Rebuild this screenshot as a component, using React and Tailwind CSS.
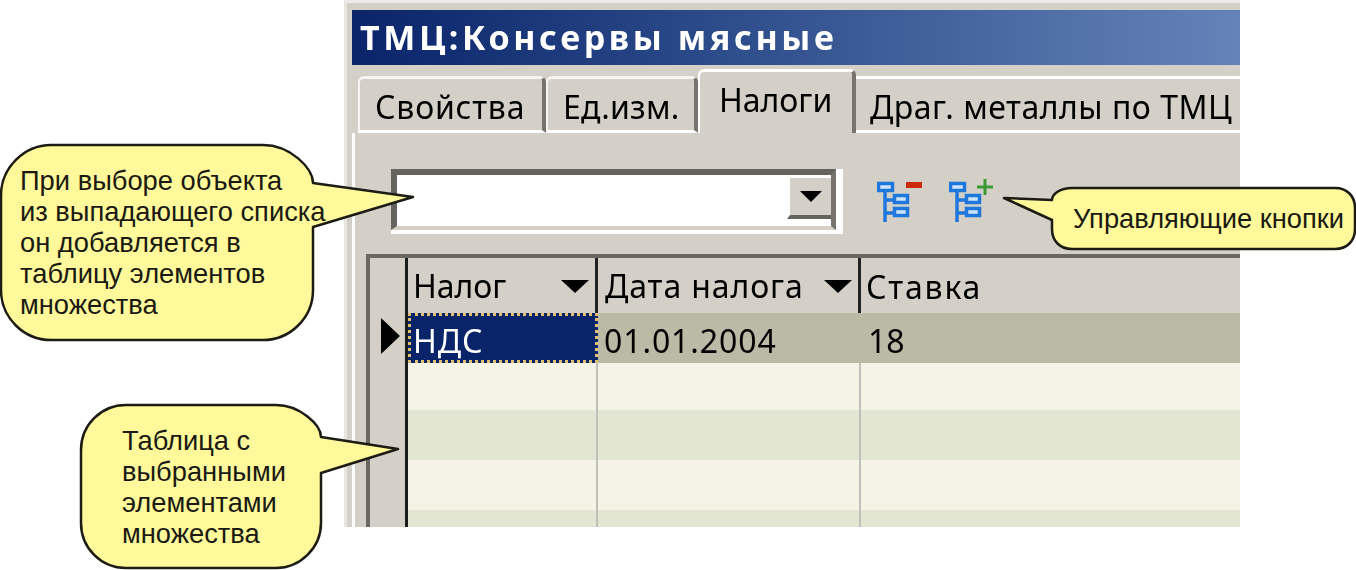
const uiFont = 'font-["Noto_Sans",sans-serif]'

function TreeIcon({ add }) {
  return (
    <svg width="46" height="46" viewBox="0 0 46 46" fill="none" className="blur-[0.5px]">
      <path d="M8 12V44M8 22H16M8 35H16" stroke="#1e78dc" strokeWidth="3.5" />
      <rect x="1.5" y="5.5" width="14" height="7" fill="#cfe3fa" stroke="#1e78dc" strokeWidth="3.5" />
      <rect x="17.5" y="17.5" width="13" height="7" fill="#cfe3fa" stroke="#1e78dc" strokeWidth="3.5" />
      <rect x="17.5" y="30.5" width="13" height="7" fill="#cfe3fa" stroke="#1e78dc" strokeWidth="3.5" />
      {add ? (
        <path d="M36 1V17M28 9H44" stroke="#3a9a32" strokeWidth="3" />
      ) : (
        <rect x="29" y="4" width="16" height="6" fill="#cc2a0c" />
      )}
    </svg>
  )
}

function Tab({ label, active, className }) {
  if (active) {
    return (
      <div className={`h-[64px] bg-[#d4d0c8] border-t-[3px] border-l-[2px] border-white border-r-[4px] border-r-[#77746e] rounded-t-[6px] pl-[19px] relative z-10 ${className}`}>
        <span className="block leading-[55px]">{label}</span>
      </div>
    )
  }
  return (
    <div className={`h-[57px] border-t-[3px] border-l-[2px] border-[#f6f5f1] border-r-[4px] border-r-[#77746e] rounded-t-[6px] pl-[15px] border-b-[3px] border-b-white ${className}`}>
      <span className="block leading-[55px] whitespace-nowrap">{label}</span>
    </div>
  )
}

function Arrow({ className }) {
  return <div className={`w-0 h-0 border-l-[14px] border-r-[14px] border-t-[13px] border-l-transparent border-r-transparent border-t-black ${className}`} />
}

function Callout({ path, className, lines }) {
  return (
    <>
      <svg width="1356" height="570" className="absolute left-0 top-0 pointer-events-none">
        <path d={path} fill="#fff99c" stroke="#1c1c14" strokeWidth="2.5" strokeLinejoin="round" />
      </svg>
      <div className={`absolute font-["Liberation_Sans",Arial,sans-serif] text-[27.3px] leading-[31px] text-[#1a1a12] whitespace-nowrap ${className}`}>
        {lines.map((l) => <div key={l}>{l}</div>)}
      </div>
    </>
  )
}

export default function App() {
  const rows = [
    'bg-[#f5f2e6] h-[47px]',
    'bg-[#e4e6d4] h-[50px]',
    'bg-[#f5f2e6] h-[50px]',
    'bg-[#e4e6d4] h-[50px]',
  ]

  return (
    <div className="relative w-[1356px] h-[570px] bg-white overflow-hidden">
      {/* window */}
      <div className={`ml-[344px] w-[896px] h-[527px] overflow-hidden blur-[0.7px] bg-[#d4d0c8] text-black text-[32px] flex flex-col border-t-[3px] border-t-[#eeece8] border-l-[3px] border-l-[#e8e6e1] pl-[5px] ${uiFont}`}>
        <div className="mt-[7px] h-[55px] shrink-0 bg-gradient-to-r from-[#0a246a] to-[#6484b8] text-white font-bold text-[34px] leading-[55px] pl-[8px] tracking-[3.6px]">
          ТМЦ:Консервы мясные
        </div>

        <div className="h-[68px] shrink-0 flex items-end pl-[6px] relative">
          <Tab label="Свойства" className="w-[188px] tracking-[0.8px]" />
          <Tab label="Ед.изм." className="w-[152px] tracking-[0.2px]" />
          <Tab label="Налоги" active className="w-[158px]" />
          <div className="flex-1 h-[57px] border-t-[3px] border-b-[3px] border-white pl-[14px]">
            <span className="block leading-[55px] whitespace-nowrap tracking-[0.5px]">Драг. металлы по ТМЦ</span>
          </div>
        </div>

        <div className="flex-1 min-h-0 border-l-[3px] border-white pl-[36px] pt-[36px] flex flex-col">
          <div className="flex items-start">
            <div className="w-[452px] h-[65px] border-r-[7px] border-b-[4px] border-white">
              <div className="h-full flex justify-end bg-white border-t-[6px] border-l-[6px] border-r-[5px] border-b-[4px] border-t-[#66635f] border-l-[#66635f] border-r-[#77746e] border-b-[#d4d0c8]">
                <div className="w-[44px] h-[44px] bg-[#d4d0c8] border-t-[3px] border-l-[3px] border-white border-b-[4px] border-b-[#66635f] border-r-0 flex items-center justify-center">
                  <div className="w-0 h-0 border-l-[11px] border-r-[11px] border-t-[11px] border-l-transparent border-r-transparent border-t-black" />
                </div>
              </div>
            </div>
            <div className="ml-[34px] mt-[9px] flex gap-[26px]">
              <TreeIcon />
              <TreeIcon add />
            </div>
          </div>

          <div className="-ml-[25px] mt-[20px] flex-1 min-h-0 flex border-t-[4px] border-l-[4px] border-t-[#6a6762] border-l-[#6a6762]">
            <div className="w-[38px] shrink-0 border-r-[3px] border-r-[#1c1c1c]">
              <div className="h-[55px]" />
              <div className="w-0 h-0 ml-[11px] mt-[5px] border-t-[18px] border-b-[18px] border-l-[19px] border-t-transparent border-b-transparent border-l-black" />
            </div>
            <div className="flex-1 min-w-0 flex flex-col">
              <div className="h-[55px] shrink-0 flex leading-[58px]">
                <div className="w-[190px] border-r-[3px] border-r-[#222] pl-[5px] flex justify-between items-center pr-[6px]">
                  <span>Налог</span>
                  <Arrow className="mt-[2px]" />
                </div>
                <div className="w-[263px] border-r-[3px] border-r-[#222] pl-[7px] flex justify-between items-center pr-[6px]">
                  <span className="whitespace-nowrap tracking-[0.9px]">Дата налога</span>
                  <Arrow className="mt-[2px]" />
                </div>
                <div className="pl-[5px] tracking-[1.8px]">Ставка</div>
              </div>
              <div className="h-[50px] shrink-0 flex bg-[#babaa6] leading-[56px]">
                <div className="w-[190px] bg-[#0a246a] text-white pl-[2px] tracking-[1px] border-[3px] border-dotted border-[#e0c070] leading-[50px]">НДС</div>
                <div className="w-[263px] pl-[6px] tracking-[0.9px]">01.01.2004</div>
                <div className="pl-[7px]">18</div>
              </div>
              {rows.map((r) => (
                <div key={r} className={`shrink-0 flex ${r}`}>
                  <div className="w-[190px] border-r-[2px] border-r-[#c0c0ba]" />
                  <div className="w-[263px] border-r-[2px] border-r-[#c0c0ba]" />
                </div>
              ))}
            </div>
          </div>
        </div>
      </div>

      <Callout
        path="M51 145H263C290 145 313 168 313 183L413 197L313 227V290C313 318 290 340 263 340H51C24 340 1 318 1 290V195C1 168 24 145 51 145Z"
        className="left-[20px] top-[165px]"
        lines={['При выборе объекта', 'из выпадающего списка', 'он добавляется в', 'таблицу элементов', 'множества']}
      />
      <Callout
        path="M126 405H276C300 405 321 425 321 437L398 449L321 473V523C321 548 300 568 276 568H126C101 568 81 548 81 523V450C81 425 101 405 126 405Z"
        className="left-[122px] top-[425px]"
        lines={['Таблица с', 'выбранными', 'элементами', 'множества']}
      />
      <Callout
        path="M1072 188H1335C1347 188 1355 196 1355 208V229C1355 241 1347 249 1335 249H1072C1060 249 1052 241 1052 229V220L1004 198L1052 200C1052 194 1060 188 1072 188Z"
        className="left-[1073px] top-[203px]"
        lines={['Управляющие кнопки']}
      />
    </div>
  )
}
